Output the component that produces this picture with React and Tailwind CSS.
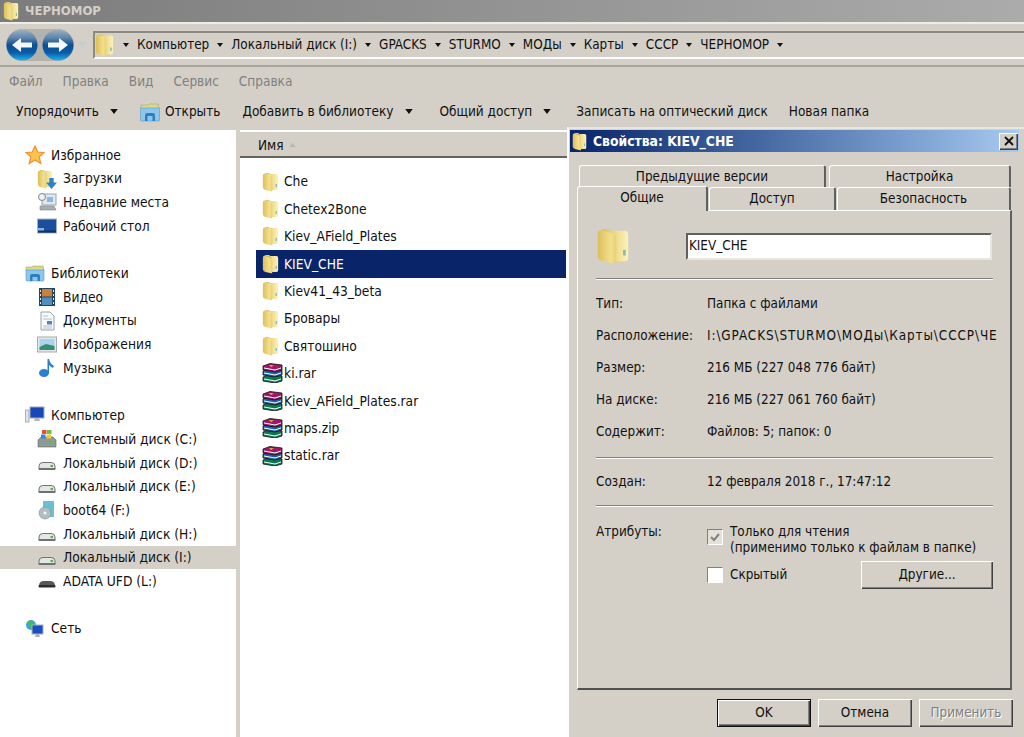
import React from 'react';

const Folder = ({ className = 'w-[17px] h-[20px]' }) => (
  <svg viewBox="0 0 20 20" preserveAspectRatio="none" className={className}>
    <defs>
      <linearGradient id="folderBack" x1="0" y1="0" x2="1" y2="0">
        <stop offset="0" stopColor="#d9bd5c" />
        <stop offset="0.55" stopColor="#efdc8a" />
        <stop offset="1" stopColor="#fbf2bc" />
      </linearGradient>
      <linearGradient id="folderFront" x1="0" y1="0" x2="1" y2="0">
        <stop offset="0" stopColor="#dcbf5a" />
        <stop offset="0.7" stopColor="#f3df8c" />
        <stop offset="1" stopColor="#e6cf78" />
      </linearGradient>
    </defs>
    <path d="M3 2.5 Q3 1 4.5 1 L8 1 Q9 1 9.5 2 L17 2 Q19 2 19 4 L19 16 Q19 18 17 18 L10 18 L10 3 Z" fill="url(#folderBack)" />
    <path d="M1 4 Q1 1.2 3.5 1.8 L10 3.5 Q12 4.2 12 6 L12 19.5 L4 18 Q1 17.4 1 15 Z" fill="url(#folderFront)" />
    <rect x="16" y="12" width="1.5" height="3" fill="#8fb7a8" />
  </svg>
);

const Rar = () => (
  <svg viewBox="0 0 21 20" className="w-[21px] h-[20px]">
    <path d="M1 14 L8 11 L20 13 L20 18 L13 20 L1 18 Z" fill="#0c7a50" stroke="#111" strokeWidth="0.8" />
    <path d="M2 16 L13 18 L19 16" fill="none" stroke="#fff" strokeWidth="1" />
    <path d="M1 8 L8 5 L20 7 L20 12 L13 14 L1 12 Z" fill="#1d5fa8" stroke="#111" strokeWidth="0.8" />
    <path d="M2 10 L13 12 L19 10" fill="none" stroke="#fff" strokeWidth="1" />
    <path d="M1 3 L8 0.5 L20 2 L20 7 L13 9 L1 7 Z" fill="#a01668" stroke="#111" strokeWidth="0.8" />
    <path d="M2 5 L13 7 L19 5" fill="none" stroke="#fff" strokeWidth="1" />
    <path d="M7 2 L12 2.5 L9 4 Z" fill="#e8c040" />
  </svg>
);

const Drive = () => (
  <svg viewBox="0 0 20 20" className="w-[20px] h-[20px]">
    <path d="M2 13 Q2 9.5 6 9.5 L14 9.5 Q18 9.5 18 13 L18 16 L2 16 Z" fill="#e4e6e4" stroke="#6f7575" strokeWidth="1" />
    <rect x="1.5" y="15" width="17" height="2" rx="1" fill="#6c7272" />
    <rect x="13.5" y="12" width="2.5" height="2" fill="#55b04a" />
  </svg>
);

const Star = () => (
  <svg viewBox="0 0 20 20" className="w-[20px] h-[20px]">
    <path d="M10 1 L12.7 7 L19 7.6 L14.2 11.8 L15.8 18.5 L10 15 L4.2 18.5 L5.8 11.8 L1 7.6 L7.3 7 Z" fill="#fbc547" stroke="#ef8f3a" strokeWidth="1.2" />
  </svg>
);

const Library = () => (
  <svg viewBox="0 0 20 20" className="w-[20px] h-[20px]">
    <path d="M1 4 L7 4 L8 3 L18 3 L19 8 L1 8 Z" fill="#dcd88c" stroke="#a6a86a" strokeWidth="0.6" />
    <path d="M1 7 L19 7 L19 17 Q19 18 18 18 L2 18 Q1 18 1 17 Z" fill="#8cc8ec" stroke="#5c9cc8" strokeWidth="0.6" />
    <path d="M5 18 L5 13 Q5 11 7 11 L13 11 Q15 11 15 13 L15 18 L12.5 18 L12.5 14 L7.5 14 L7.5 18 Z" fill="#2f7fc0" />
  </svg>
);

const Downloads = () => (
  <div className="relative w-[20px] h-[20px]">
    <Folder className="w-[16px] h-[20px]" />
    <svg viewBox="0 0 10 10" className="absolute right-0 bottom-0 w-[11px] h-[11px]">
      <path d="M3 0 H7 V4 H10 L5 10 L0 4 H3 Z" fill="#2f80c8" />
    </svg>
  </div>
);

const Recent = () => (
  <svg viewBox="0 0 20 20" className="w-[20px] h-[20px]">
    <rect x="5" y="2" width="14" height="11" fill="#dfe8f0" stroke="#9aa4aa" />
    <rect x="10" y="5" width="6" height="5" fill="#8cb8e0" />
    <circle cx="5" cy="5" r="3.5" fill="#eef2f4" stroke="#80888c" />
    <path d="M3 14 H17 L19 18 H3 Z" fill="#a8aeb0" stroke="#80888c" strokeWidth="0.6" />
  </svg>
);

const Desktop = () => (
  <svg viewBox="0 0 20 20" className="w-[20px] h-[20px]">
    <rect x="0.5" y="3" width="19" height="14" fill="#1b4f9c" stroke="#9fb2c4" />
    <rect x="1" y="12" width="6" height="3" fill="#7fb8e8" />
    <rect x="1" y="14.5" width="18" height="2" fill="#16305c" />
  </svg>
);

const Video = () => (
  <svg viewBox="0 0 20 20" className="w-[20px] h-[20px]">
    <rect x="2" y="1" width="16" height="18" fill="#27465e" />
    <rect x="5" y="2" width="10" height="7.5" fill="#c88040" />
    <rect x="5" y="10.5" width="10" height="7.5" fill="#5090c0" />
    <path d="M3 3h1v2H3zM3 7h1v2H3zM3 11h1v2H3zM3 15h1v2H3zM16 3h1v2h-1zM16 7h1v2h-1zM16 11h1v2h-1zM16 15h1v2h-1z" fill="#dce8f0" />
  </svg>
);

const Docs = () => (
  <svg viewBox="0 0 20 20" className="w-[20px] h-[20px]">
    <path d="M4 1 H13 L17 5 V19 H4 Z" fill="#f8fafc" stroke="#9aa2aa" />
    <path d="M6 5h5M6 8h9M6 15h9M6 17h9" stroke="#a8b0b8" strokeWidth="0.8" />
    <rect x="10" y="10" width="5" height="3.5" fill="#4a88c0" />
  </svg>
);

const Pictures = () => (
  <svg viewBox="0 0 20 20" className="w-[20px] h-[20px]">
    <rect x="0.5" y="3" width="19" height="15" fill="#e4e8ea" stroke="#a4acb2" />
    <rect x="2.5" y="5" width="15" height="11" fill="#a8d4f0" />
    <path d="M2.5 13 L9 10 L17.5 12 V16 H2.5 Z" fill="#3c8a70" />
  </svg>
);

const Music = () => (
  <svg viewBox="0 0 20 20" className="w-[20px] h-[20px]">
    <ellipse cx="7" cy="15" rx="5" ry="4" fill="#2a7fd0" />
    <path d="M10.5 15 L10.5 1 L12 1 Q13 6 17 8 L16 10 Q13 8.5 12 7 L12 15 Z" fill="#2a7fd0" />
  </svg>
);

const Computer = () => (
  <svg viewBox="0 0 20 20" className="w-[20px] h-[20px]">
    <rect x="0.5" y="5" width="3.5" height="12" fill="#dfe4e4" stroke="#808a8a" strokeWidth="0.6" />
    <rect x="5" y="2" width="14" height="11" fill="#1848b8" stroke="#a0aab2" />
    <path d="M10 13 H14 L15 16 H9 Z" fill="#b0b8bc" />
  </svg>
);

const SystemDrive = () => (
  <svg viewBox="0 0 20 20" className="w-[20px] h-[20px]">
    <path d="M1 11 L4 8 H16 L19 11 V18 H1 Z" fill="#8e9a98" stroke="#5c6866" strokeWidth="0.6" />
    <rect x="13" y="13" width="3" height="2" fill="#5cc050" />
    <rect x="5" y="1" width="4.5" height="4" fill="#e85030" />
    <rect x="10" y="1" width="4.5" height="4" fill="#70c040" />
    <rect x="4" y="5.5" width="4.5" height="4" fill="#3088e0" />
    <rect x="9.5" y="5.5" width="4.5" height="4" fill="#f8c830" />
  </svg>
);

const Boot = () => (
  <svg viewBox="0 0 20 20" className="w-[20px] h-[20px]">
    <rect x="6" y="1" width="11" height="16" fill="#68c0d4" />
    <circle cx="8" cy="13" r="6" fill="#b0bec4" stroke="#80909a" strokeWidth="0.6" />
    <circle cx="8" cy="13" r="1.6" fill="#f0f4f4" />
  </svg>
);

const Usb = () => (
  <svg viewBox="0 0 20 20" className="w-[20px] h-[20px]">
    <path d="M2 15 Q2 10 7 10 L13 10 Q18 10 18 15 Z" fill="#55595a" />
    <rect x="1.5" y="14" width="17" height="2.5" rx="1" fill="#2c2e30" />
  </svg>
);

const Network = () => (
  <svg viewBox="0 0 20 20" className="w-[20px] h-[20px]">
    <circle cx="6" cy="6" r="5" fill="#38a8d8" />
    <path d="M3 3 L8 2 L9 6 L5 9 Z" fill="#50b848" />
    <rect x="7" y="6" width="11" height="9" fill="#1850c0" stroke="#a4b0b8" />
    <path d="M11 15 H14 L15 18 H10 Z" fill="#a8b2b8" />
  </svg>
);

const Open = () => (
  <svg viewBox="0 0 20 20" className="w-[20px] h-[20px]">
    <path d="M1 3 L8 3 L9 2 L18 2 L19 8 L1 8 Z" fill="#dcd88c" stroke="#a6a86a" strokeWidth="0.6" />
    <path d="M0.5 6 L19.5 6 L19.5 18 Q19.5 19 18.5 19 L1.5 19 Q0.5 19 0.5 18 Z" fill="#8cc8ec" stroke="#5c9cc8" strokeWidth="0.6" />
    <path d="M5 19 L5 13 Q5 11 7 11 L13 11 Q15 11 15 13 L15 19 L12.5 19 L12.5 14 L7.5 14 L7.5 19 Z" fill="#2f7fc0" />
  </svg>
);

const NavButton = ({ flip }) => (
  <svg viewBox="0 0 32 32" className="w-[32px] h-[32px]">
    <defs>
      <linearGradient id="navBlue" x1="0" y1="0" x2="0" y2="1">
        <stop offset="0" stopColor="#9fb0c0" />
        <stop offset="0.28" stopColor="#5c84ac" />
        <stop offset="0.5" stopColor="#0c4f92" />
        <stop offset="0.75" stopColor="#0a5ca8" />
        <stop offset="1" stopColor="#22b0e8" />
      </linearGradient>
    </defs>
    <circle cx="16" cy="16" r="15.5" fill="url(#navBlue)" />
    <g transform={flip ? 'rotate(180 16 16)' : undefined}>
      <path d="M6 16 L15 9 L15 13.5 L26 13.5 L26 18.5 L15 18.5 L15 23 Z" fill="#f4f8fc" />
    </g>
  </svg>
);

const Caret = ({ className = 'w-[6px] h-[4px] text-[#111]' }) => (
  <svg viewBox="0 0 6 4" className={className}>
    <path d="M0 0 H6 L3 4 Z" fill="currentColor" />
  </svg>
);

const ToolCaret = () => <Caret className="w-[10px] h-[5px] text-[#111]" />;

const crumbs = ['Компьютер', 'Локальный диск (I:)', 'GPACKS', 'STURMO', 'МОДы', 'Карты', 'СССР', 'ЧЕРНОМОР'];

const navItems = [
  { label: 'Избранное', icon: Star },
  { label: 'Загрузки', icon: Downloads, sub: true },
  { label: 'Недавние места', icon: Recent, sub: true },
  { label: 'Рабочий стол', icon: Desktop, sub: true },
  null,
  { label: 'Библиотеки', icon: Library },
  { label: 'Видео', icon: Video, sub: true },
  { label: 'Документы', icon: Docs, sub: true },
  { label: 'Изображения', icon: Pictures, sub: true },
  { label: 'Музыка', icon: Music, sub: true },
  null,
  { label: 'Компьютер', icon: Computer },
  { label: 'Системный диск (C:)', icon: SystemDrive, sub: true },
  { label: 'Локальный диск (D:)', icon: Drive, sub: true },
  { label: 'Локальный диск (E:)', icon: Drive, sub: true },
  { label: 'boot64 (F:)', icon: Boot, sub: true },
  { label: 'Локальный диск (H:)', icon: Drive, sub: true },
  { label: 'Локальный диск (I:)', icon: Drive, sub: true, active: true },
  { label: 'ADATA UFD (L:)', icon: Usb, sub: true },
  null,
  { label: 'Сеть', icon: Network },
];

const files = [
  { name: 'Che' },
  { name: 'Chetex2Bone' },
  { name: 'Kiev_AField_Plates' },
  { name: 'KIEV_CHE', selected: true },
  { name: 'Kiev41_43_beta' },
  { name: 'Бровары' },
  { name: 'Святошино' },
  { name: 'ki.rar', rar: true },
  { name: 'Kiev_AField_Plates.rar', rar: true },
  { name: 'maps.zip', rar: true },
  { name: 'static.rar', rar: true },
];

const raised = 'bg-[#d4d0c8] shadow-[inset_1px_1px_0_#ffffff,inset_-1px_-1px_0_#404040,inset_-2px_-2px_0_#808080]';

function Sidebar() {
  return (
    <aside className="w-[236px] h-full bg-white pt-[13px] shrink-0 text-[13.7px]">
      {navItems.map((item, i) => {
        if (!item) return <div key={i} className="h-[23.7px]" />;
        const Icon = item.icon;
        return (
          <div key={i} className={`h-[23.7px] flex items-center ${item.sub ? 'pl-[37px]' : 'pl-[25px]'} ${item.active ? 'bg-[#d4d0c8]' : ''}`}>
            <div className="w-[20px] flex justify-center"><Icon /></div>
            <span className="ml-[6px]">{item.label}</span>
          </div>
        );
      })}
    </aside>
  );
}

function FileList() {
  return (
    <section className="flex-1 h-full bg-white ml-[4px] pt-[2px]">
      <div className="h-[26px] bg-[#d4d0c8] border-b-2 border-[#66645f] flex items-center pl-[18px] pt-[2px]">
        <span>Имя</span>
        <Caret className="w-[7px] h-[4px] text-[#b8b4ac] rotate-180 ml-[5px]" />
      </div>
      <div className="pt-[10px] pl-[16px] text-[13.7px]">
        {files.map(f => (
          <div key={f.name} className={`h-[27.4px] flex items-center w-[310px] ${f.selected ? 'bg-[#0a246a] text-white' : ''}`}>
            <div className="w-[28px] pl-[6px] shrink-0">{f.rar ? <Rar /> : <Folder />}</div>
            <span>{f.name}</span>
          </div>
        ))}
      </div>
    </section>
  );
}

const Tab = ({ label, className, textClass = 'mt-[2px]' }) => (
  <div className={`bg-[#d4d0c8] rounded-t-[3px] border-t border-l border-white border-r-2 border-r-[#606060] flex items-center justify-center ${className}`}>
    <span className={textClass}>{label}</span>
  </div>
);

const Divider = ({ className = '' }) => (
  <div className={`h-[2px] border-t border-[#808080] border-b border-b-white ${className}`} />
);

const Prop = ({ label, value, className, valueClass = '' }) => (
  <div className={`flex items-center ${className}`}>
    <span className="w-[111px] shrink-0">{label}</span>
    <span className={`whitespace-nowrap overflow-hidden ${valueClass}`}>{value}</span>
  </div>
);

const Check = ({ checked }) => (
  <div className={`w-[16px] h-[16px] shrink-0 border border-t-[#808080] border-l-[#808080] border-r-white border-b-white flex items-center justify-center ${checked ? 'bg-[#e4e1db]' : 'bg-white'}`}>
    {checked && (
      <svg viewBox="0 0 12 12" className="w-[12px] h-[12px]">
        <path d="M2 6 L5 9 L10 3" fill="none" stroke="#808080" strokeWidth="2" />
      </svg>
    )}
  </div>
);

function PropertiesDialog() {
  return (
    <div className="absolute left-[567px] top-[127px] w-[457px] h-[610px] bg-[#d4d0c8] border-l-2 border-l-white border-t-2 border-t-[#e8e6e0] p-[1px] text-[13.4px]">
      <div className="h-[22px] mr-[4px] bg-gradient-to-r from-[#0a246a] to-[#a6caf0] flex items-center text-white pl-[2px]">
        <Folder className="w-[15px] h-[19px]" />
        <span className="font-bold ml-[6px] flex-1 text-[13.8px]">Свойства: KIEV_CHE</span>
        <div className={`w-[19px] h-[17px] mr-[1px] flex items-center justify-center ${raised}`}>
          <svg viewBox="0 0 10 10" className="w-[10px] h-[10px]">
            <path d="M1 1 L9 9 M9 1 L1 9" stroke="#111" strokeWidth="1.8" />
          </svg>
        </div>
      </div>

      <div className="ml-[7px] w-[435px] text-[#111] mt-[13px]">
        <div className="flex pl-[2px] h-[22px]">
          <Tab label="Предыдущие версии" className="w-[247px]" />
          <Tab label="Настройка" className="w-[182px] ml-[3px]" />
        </div>
        <div className="flex h-[23px] items-end">
          <Tab label="Общие" className="w-[131px] h-[25px] -mb-[1px] relative z-10" textClass="-mt-[2px]" />
          <Tab label="Доступ" className="w-[127px] h-[23px] ml-[1px]" textClass="mt-[1px]" />
          <Tab label="Безопасность" className="w-[174px] h-[23px] ml-[1px]" textClass="mt-[1px]" />
        </div>

        <div className="h-[480px] border-l border-t border-white border-r-2 border-r-[#606060] border-b-2 border-b-[#505050] px-[18px] pt-[16px]">
          <div className="flex items-center h-[38px]">
            <Folder className="w-[34px] h-[38px]" />
            <div className="ml-[56px] w-[307px] h-[27px] bg-white border-2 border-t-[#606060] border-l-[#606060] border-r-[#e8e6e0] border-b-[#e8e6e0] flex items-center pl-[1px]">KIEV_CHE</div>
          </div>
          <Divider className="mt-[13px] w-[397px]" />
          <Prop label="Тип:" value="Папка с файлами" className="h-[20px] mt-[14px]" />
          <Prop label="Расположение:" value="I:\GPACKS\STURMO\МОДы\Карты\СССР\ЧЕ" className="h-[20px] mt-[12px] w-[403px]" valueClass="tracking-[0.9px]" />
          <Prop label="Размер:" value="216 МБ (227 048 776 байт)" className="h-[20px] mt-[12px]" />
          <Prop label="На диске:" value="216 МБ (227 061 760 байт)" className="h-[20px] mt-[12px]" />
          <Prop label="Содержит:" value="Файлов: 5; папок: 0" className="h-[20px] mt-[12px]" />
          <Divider className="mt-[15px] w-[397px]" />
          <Prop label="Создан:" value="12 февраля 2018 г., 17:47:12" className="h-[20px] mt-[13px]" />
          <Divider className="mt-[13px] w-[397px]" />
          <div className="flex mt-[15px]">
            <span className="w-[111px] shrink-0 leading-[20px]">Атрибуты:</span>
            <div className="flex-1">
              <div className="flex">
                <div className="pt-[7px]"><Check checked /></div>
                <div className="ml-[7px] leading-[16px] whitespace-nowrap pt-[2px]">
                  <div>Только для чтения</div>
                  <div>(применимо только к файлам в папке)</div>
                </div>
              </div>
              <div className="flex items-center mt-[5px] h-[28px]">
                <Check />
                <span className="ml-[7px] flex-1">Скрытый</span>
                <div className={`w-[132px] h-[28px] mr-[-1px] flex items-center justify-center ${raised}`}>Другие...</div>
              </div>
            </div>
          </div>
        </div>

        <div className="flex justify-end gap-[7px] mt-[9px] -mr-[1px]">
          <div className="w-[94px] h-[28px] border border-[#111] flex">
            <div className={`flex-1 flex items-center justify-center ${raised}`}>OK</div>
          </div>
          <div className={`w-[94px] h-[28px] flex items-center justify-center ${raised}`}>Отмена</div>
          <div className={`w-[94px] h-[28px] flex items-center justify-center text-[#808080] [text-shadow:1px_1px_0_#fff] ${raised}`}>Применить</div>
        </div>
      </div>
    </div>
  );
}

export default function App() {
  return (
    <div className="relative w-[1024px] h-[737px] overflow-hidden bg-[#d4d0c8] font-['DejaVu_Sans_Condensed','DejaVu_Sans',sans-serif] text-[13.5px] text-[#111]">
      {/* title bar */}
      <div className="h-[22px] bg-gradient-to-r from-[#7c7c7c] to-[#ababab] flex items-center pl-[3px]">
        <Folder className="w-[16px] h-[20px]" />
        <span className="ml-[6px] font-bold text-[13px] text-[#d4d0c8]">ЧЕРНОМОР</span>
      </div>

      {/* address bar */}
      <div className="h-[45px] border-t-2 border-[#eeece6] border-b-2 border-b-[#a8a59e] flex items-center pl-[6px]">
        <div className="flex items-center gap-[4px] rounded-full bg-[#b4b2ac]">
          <NavButton />
          <NavButton flip />
        </div>
        <Caret className="w-[11px] h-[6px] text-[#c8ccd0] ml-[3px]" />
        <div className="ml-[5px] flex-1 h-[28px] border-l-2 border-l-[#8c8a84] border-t-2 border-t-[#8c8a84] border-b-2 border-b-white flex items-center text-[13.4px]">
          <Folder className="w-[19px] h-[24px]" />
          <div className="flex items-center ml-[9px] pt-[2px]">
            {crumbs.map(c => (
              <React.Fragment key={c}>
                <Caret />
                <span className="mx-[8px] whitespace-nowrap">{c}</span>
              </React.Fragment>
            ))}
            <Caret />
          </div>
        </div>
      </div>

      {/* menu */}
      <div className="h-[29px] flex items-center pl-[9px] gap-[20px] text-[#808080]">
        <span>Файл</span>
        <span>Правка</span>
        <span>Вид</span>
        <span>Сервис</span>
        <span>Справка</span>
      </div>

      {/* toolbar */}
      <div className="h-[32px] flex items-center pl-[16px] pb-[1px] whitespace-nowrap">
        <span>Упорядочить</span>
        <span className="ml-[10px]"><ToolCaret /></span>
        <span className="ml-[21px]"><Open /></span>
        <span className="ml-[5px]">Открыть</span>
        <span className="ml-[22px]">Добавить в библиотеку</span>
        <span className="ml-[11px]"><ToolCaret /></span>
        <span className="ml-[25px]">Общий доступ</span>
        <span className="ml-[10px]"><ToolCaret /></span>
        <span className="ml-[24px]">Записать на оптический диск</span>
        <span className="ml-[21px]">Новая папка</span>
      </div>

      {/* body */}
      <div className="h-[607px] mt-[2px] flex">
        <Sidebar />
        <FileList />
      </div>

      <PropertiesDialog />
    </div>
  );
}
